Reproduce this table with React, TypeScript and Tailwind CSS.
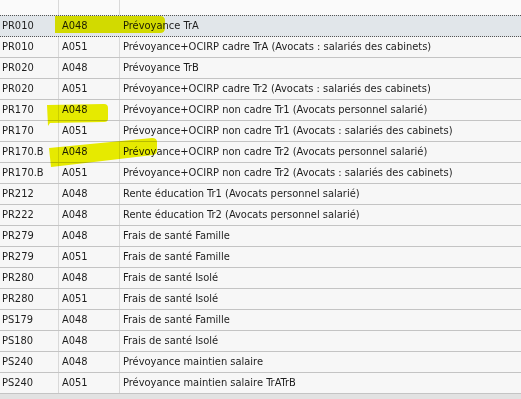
import React from "react";

const rows: [string, string, string][] = [
  ["PR010", "A048", "Prévoyance TrA"],
  ["PR010", "A051", "Prévoyance+OCIRP cadre TrA (Avocats : salariés des cabinets)"],
  ["PR020", "A048", "Prévoyance TrB"],
  ["PR020", "A051", "Prévoyance+OCIRP cadre Tr2 (Avocats : salariés des cabinets)"],
  ["PR170", "A048", "Prévoyance+OCIRP non cadre Tr1 (Avocats personnel salarié)"],
  ["PR170", "A051", "Prévoyance+OCIRP non cadre Tr1 (Avocats : salariés des cabinets)"],
  ["PR170.B", "A048", "Prévoyance+OCIRP non cadre Tr2 (Avocats personnel salarié)"],
  ["PR170.B", "A051", "Prévoyance+OCIRP non cadre Tr2 (Avocats : salariés des cabinets)"],
  ["PR212", "A048", "Rente éducation Tr1 (Avocats personnel salarié)"],
  ["PR222", "A048", "Rente éducation Tr2 (Avocats personnel salarié)"],
  ["PR279", "A048", "Frais de santé Famille"],
  ["PR279", "A051", "Frais de santé Famille"],
  ["PR280", "A048", "Frais de santé Isolé"],
  ["PR280", "A051", "Frais de santé Isolé"],
  ["PS179", "A048", "Frais de santé Famille"],
  ["PS180", "A048", "Frais de santé Isolé"],
  ["PS240", "A048", "Prévoyance maintien salaire"],
  ["PS240", "A051", "Prévoyance maintien salaire TrATrB"],
];

export default function App() {
  return (
    <div
      className="relative w-[521px] h-[399px] overflow-hidden bg-[#e2e2e2] text-[11px] text-[#1e1e1e]"
      style={{ fontFamily: '"DejaVu Sans Condensed", "DejaVu Sans", sans-serif' }}
    >
      <div className="flex h-[15px] bg-[#fafafa]">
        <div className="w-[59px] border-r border-[#d9d9d9]" />
        <div className="w-[61px] border-r border-[#d9d9d9]" />
        <div className="flex-1" />
      </div>
      {rows.map((r, i) => {
        const sel = i === 0;
        return (
          <div
            key={i}
            className={
              sel
                ? "flex h-[22px] items-center border-y border-dotted border-[#555] bg-[#e1e6ea]"
                : "flex h-[21px] items-center border-b border-[#c4c4c4] bg-[#f7f7f7]"
            }
          >
            <div className={sel ? "w-[59px] h-full flex items-center pl-[2px]" : "w-[59px] h-full flex items-center pl-[2px] border-r border-[#d9d9d9]"}>
              {r[0]}
            </div>
            <div className={sel ? "w-[61px] h-full flex items-center pl-[3px]" : "w-[61px] h-full flex items-center pl-[3px] border-r border-[#d9d9d9]"}>
              {r[1]}
            </div>
            <div className="flex-1 h-full flex items-center pl-[3px] whitespace-nowrap">{r[2]}</div>
          </div>
        );
      })}
      <svg
        className="absolute left-0 top-0 pointer-events-none mix-blend-multiply"
        width="521"
        height="399"
      >
        <path d="M55 16 L160 16 Q165 16 165 21 L165 28 Q165 33 160 33 L55 33 Z" fill="#eef200" />
        <path d="M47 105 L104 104 Q108 104 108 108 L108 119 Q108 122 104 122 L50 123 L48 126 Z" fill="#eef200" />
        <path d="M49 148 L152 138 Q157 138 157 142 L157 151 Q157 154 153 155 L60 166 L51 167 Z" fill="#eef200" />
      </svg>
    </div>
  );
}
